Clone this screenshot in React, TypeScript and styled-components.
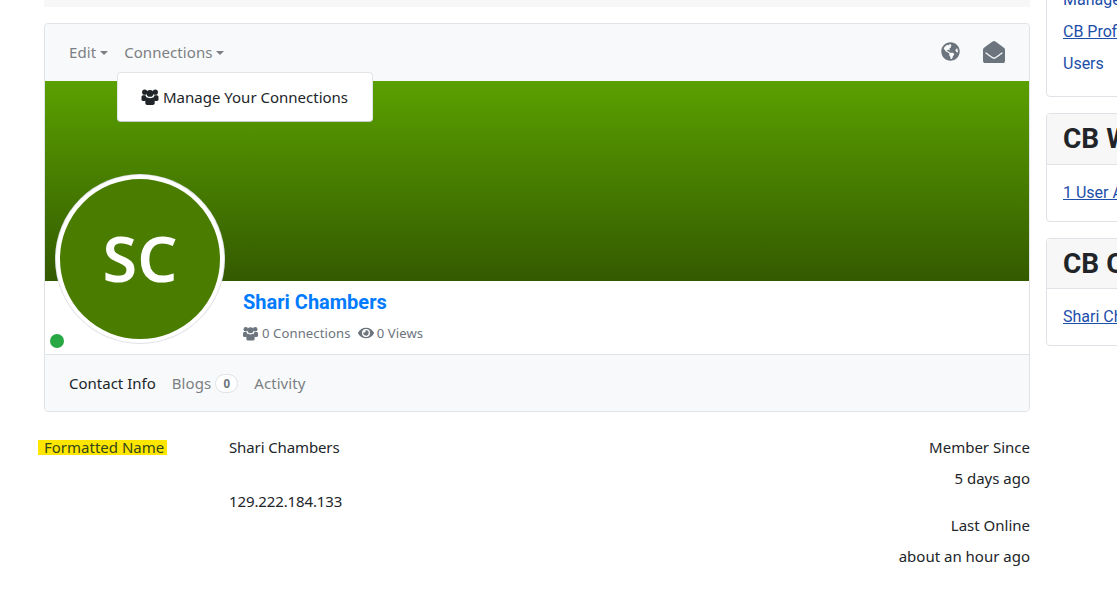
import React from 'react';
import styled, { createGlobalStyle } from 'styled-components';
import { FaEye, FaGlobeAmericas, FaEnvelopeOpen } from 'react-icons/fa';

const GlobalStyle = createGlobalStyle`
  html, body {
    margin: 0;
    padding: 0;
    background: #fff;
    overflow: hidden;
  }
  body {
    font-family: 'Noto Sans', 'Open Sans', sans-serif;
    font-size: 15px;
    color: #212529;
  }
`;

const Page = styled.div`
  width: 1117px;
  height: 598px;
  overflow: hidden;
  display: flex;
  gap: 16px;
  padding-left: 44px;
  box-sizing: border-box;
`;

const Main = styled.main`
  width: 986px;
  flex: none;
`;

const TopStrip = styled.div`
  height: 7px;
  background: #f7f7f7;
  margin-bottom: 16px;
`;

const ProfileCard = styled.section`
  position: relative;
  border: 1px solid #dfe2e6;
  border-radius: 4px;
  height: 389px;
  box-sizing: border-box;
  display: flex;
  flex-direction: column;
`;

const TopNav = styled.nav`
  height: 57px;
  flex: none;
  box-sizing: border-box;
  padding: 0 24px 2px;
  background: #f8f9fa;
  border-radius: 4px 4px 0 0;
  display: flex;
  align-items: center;
  gap: 16px;
`;

const NavLink = styled.a<{ $active?: boolean }>`
  color: ${p => (p.$active ? '#212529' : '#7b7f83')};
  white-space: nowrap;
  letter-spacing: ${p => (p.$active ? '0' : '0.07px')};
`;

const Caret = styled.span`
  display: inline-block;
  margin-left: 4px;
  vertical-align: 3px;
  border-top: 4.5px solid currentColor;
  border-left: 4.5px solid transparent;
  border-right: 4.5px solid transparent;
`;

const NavIcons = styled.div`
  margin-left: auto;
  display: flex;
  align-items: center;
  gap: 23px;
  color: #6c757d;
`;

const Dropdown = styled.div`
  position: absolute;
  left: 72px;
  top: 48px;
  width: 256px;
  height: 50px;
  box-sizing: border-box;
  background: #fff;
  border: 1px solid #e2e4e6;
  border-bottom-color: #c8cacc;
  border-radius: 4px;
  display: flex;
  align-items: center;
  gap: 4px;
  padding: 0 0 1px 23px;
  z-index: 2;
  color: #212529;
`;

const Banner = styled.div`
  height: 200px;
  flex: none;
  background: linear-gradient(to bottom, #5aa000, #345a00);
`;

const Avatar = styled.div`
  position: absolute;
  left: 11px;
  top: 151px;
  width: 168px;
  height: 168px;
  box-sizing: border-box;
  padding-bottom: 4px;
  border-radius: 50%;
  background: #4a7c00;
  border: 4px solid #fff;
  box-shadow: 0 0 0 1px #dfe2e6;
  color: #fff;
  display: flex;
  align-items: center;
  justify-content: center;
  font-size: 63px;
  font-weight: 600;
  line-height: 1;
`;

const StatusDot = styled.span`
  position: absolute;
  left: 5px;
  top: 310px;
  width: 14px;
  height: 14px;
  border-radius: 50%;
  background: #28a745;
`;

const ProfileInfo = styled.div`
  height: 74px;
  flex: none;
  box-sizing: border-box;
  padding: 9px 0 0 198px;
  border-bottom: 1px solid #dfe2e6;
`;

const Name = styled.a`
  display: block;
  font-family: Roboto, sans-serif;
  font-weight: 700;
  font-size: 20px;
  line-height: 24px;
  color: #007bff;
`;

const Stats = styled.div`
  margin-top: 9px;
  display: flex;
  align-items: center;
  gap: 7px;
  font-size: 13.1px;
  letter-spacing: 0.1px;
  line-height: 20px;
  color: #6c757d;
`;

const Stat = styled.span<{ $gap: number }>`
  display: inline-flex;
  align-items: center;
  gap: ${p => p.$gap}px;
`;

const Tabs = styled.div`
  flex: 1;
  background: #f8f9fa;
  border-radius: 0 0 4px 4px;
  display: flex;
  align-items: center;
  gap: 16px;
  padding: 0 24px 1px;
`;

const TabCount = styled.span`
  display: inline-block;
  margin-left: 4px;
  min-width: 23px;
  height: 19px;
  box-sizing: border-box;
  border: 1px solid #dfe2e6;
  border-radius: 10px;
  background: #fff;
  color: #6c757d;
  font-size: 11.5px;
  font-weight: 700;
  line-height: 17px;
  text-align: center;
  vertical-align: 1px;
`;

const Details = styled.div`
  display: flex;
  justify-content: space-between;
  margin-top: 20px;
  line-height: 31px;
`;

const Fields = styled.div`
  display: grid;
  grid-template-columns: 185px auto;
  grid-auto-rows: 54px;
  align-content: start;
  letter-spacing: -0.12px;
`;

const Highlight = styled.span`
  justify-self: start;
  align-self: start;
  margin: 8px 0 0 -6px;
  padding: 0 2.5px 0 6px;
  line-height: 15px;
  letter-spacing: 0;
  background: #ffe600;
  color: #33471a;
`;

const Meta = styled.div`
  text-align: right;
`;

const MetaGroup = styled.div`
  margin-bottom: 16px;
`;

const Sidebar = styled.aside`
  width: 260px;
  flex: none;
  margin-top: -20px;
  display: flex;
  flex-direction: column;
  gap: 16px;
  font-family: Roboto, sans-serif;
  font-size: 16px;
`;

const SideCard = styled.div<{ $height: number }>`
  height: ${p => p.$height}px;
  box-sizing: border-box;
  border: 1px solid #dfe2e6;
  border-radius: 4px;
  overflow: hidden;
`;

const SideHeader = styled.h3<{ $height: number }>`
  margin: 0;
  height: ${p => p.$height}px;
  box-sizing: border-box;
  padding: 0 16px;
  background: #f7f7f7;
  border-bottom: 1px solid #dfe2e6;
  font-size: 28px;
  font-weight: 700;
  line-height: 50px;
  color: #212529;
  white-space: nowrap;
`;

const SideBody = styled.div`
  padding: 16px;
  white-space: nowrap;
  line-height: 24px;
`;

const MenuBody = styled.div`
  padding: 3px 16px 0;
  white-space: nowrap;
`;

const MenuLink = styled.a<{ $underline?: boolean }>`
  display: block;
  color: #1c4eaa;
  line-height: 32px;
  text-decoration: ${p => (p.$underline ? 'underline' : 'none')};
`;

const SideLink = styled.a`
  color: #1c4eaa;
  text-decoration: underline;
`;

const UsersGlyph = ({ width, height }: { width: number; height: number }) => (
  <svg width={width} height={height} viewBox="0 0 17 16" fill="currentColor" style={{ flex: 'none' }}>
    <circle cx="3.2" cy="3.2" r="2.6" />
    <circle cx="13.8" cy="3.2" r="2.6" />
    <circle cx="8.5" cy="4.4" r="3.4" />
    <path d="M1.6 6.2h2.4c.3 1.2 1 2.2 1.6 2.7-.9.6-1.4 1.5-1.5 3H1.4C.5 11.9 0 11.4 0 10.6V8C0 6.9.7 6.2 1.6 6.2z" />
    <path d="M15.4 6.2H13c-.3 1.2-1 2.2-1.6 2.7.9.6 1.4 1.5 1.5 3h2.7c.9 0 1.4-.5 1.4-1.3V8c0-1.1-.7-1.8-1.6-1.8z" />
    <path d="M6 8.4c.7.5 1.6.8 2.5.8s1.8-.3 2.5-.8c1.4.3 2.2 1.3 2.2 2.7V14c0 1.2-.8 2-2 2H5.8c-1.2 0-2-.8-2-2v-2.9c0-1.4.8-2.4 2.2-2.7z" />
  </svg>
);

export default function App() {
  return (
    <>
      <GlobalStyle />
      <Page>
        <Main>
          <TopStrip />
          <ProfileCard>
            <TopNav>
              <NavLink>Edit<Caret /></NavLink>
              <NavLink>Connections<Caret /></NavLink>
              <NavIcons>
                <FaGlobeAmericas size={19} />
                <FaEnvelopeOpen size={22} />
              </NavIcons>
            </TopNav>
            <Dropdown>
              <UsersGlyph width={18} height={16} />
              Manage Your Connections
            </Dropdown>
            <Banner />
            <Avatar>SC</Avatar>
            <StatusDot />
            <ProfileInfo>
              <Name>Shari Chambers</Name>
              <Stats>
                <Stat $gap={4}><UsersGlyph width={15} height={15} />0 Connections</Stat>
                <Stat $gap={3}><FaEye size={16} />0 Views</Stat>
              </Stats>
            </ProfileInfo>
            <Tabs>
              <NavLink $active>Contact Info</NavLink>
              <NavLink>Blogs<TabCount>0</TabCount></NavLink>
              <NavLink>Activity</NavLink>
            </Tabs>
          </ProfileCard>
          <Details>
            <Fields>
              <Highlight>Formatted Name</Highlight>
              <span>Shari Chambers</span>
              <span />
              <span>129.222.184.133</span>
            </Fields>
            <Meta>
              <MetaGroup>
                <div>Member Since</div>
                <div>5 days ago</div>
              </MetaGroup>
              <MetaGroup>
                <div>Last Online</div>
                <div>about an hour ago</div>
              </MetaGroup>
            </Meta>
          </Details>
        </Main>
        <Sidebar>
          <SideCard $height={117}>
            <MenuBody>
              <MenuLink>Manage</MenuLink>
              <MenuLink $underline>CB Profile</MenuLink>
              <MenuLink>Users</MenuLink>
            </MenuBody>
          </SideCard>
          <SideCard $height={109}>
            <SideHeader $height={51}>CB Who's Online</SideHeader>
            <SideBody><SideLink>1 User Active</SideLink></SideBody>
          </SideCard>
          <SideCard $height={108}>
            <SideHeader $height={50}>CB Online</SideHeader>
            <SideBody><SideLink>Shari Chambers</SideLink></SideBody>
          </SideCard>
        </Sidebar>
      </Page>
    </>
  );
}
